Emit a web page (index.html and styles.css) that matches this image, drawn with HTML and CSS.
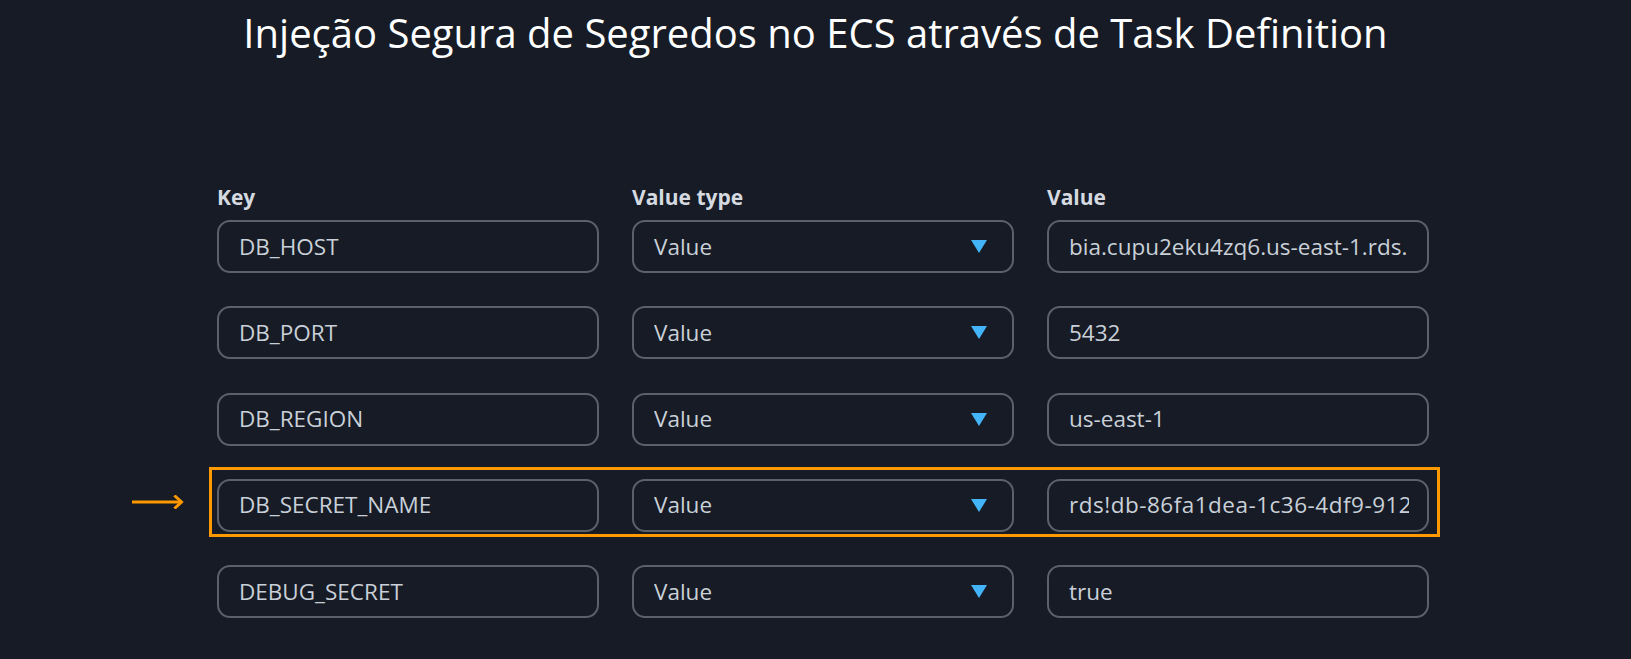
FILE: index.html
```html
<!DOCTYPE html>
<html lang="pt">
<head>
<meta charset="utf-8">
<title>Injeção Segura de Segredos no ECS através de Task Definition</title>
<link rel="stylesheet" href="styles.css">
</head>
<body>
<h1 class="title">Injeção Segura de Segredos no ECS através de Task Definition</h1>
<main class="form">
  <div class="grid labels">
    <div class="label">Key</div>
    <div class="label">Value type</div>
    <div class="label">Value</div>
  </div>
  <div class="rows">
    <div class="grid row">
      <div class="field"><span class="text">DB_HOST</span></div>
      <div class="field select"><span class="text">Value</span><span class="caret"></span></div>
      <div class="field"><span class="text">bia.cupu2eku4zq6.us-east-1.rds.</span></div>
    </div>
    <div class="grid row">
      <div class="field"><span class="text">DB_PORT</span></div>
      <div class="field select"><span class="text">Value</span><span class="caret"></span></div>
      <div class="field"><span class="text">5432</span></div>
    </div>
    <div class="grid row">
      <div class="field"><span class="text">DB_REGION</span></div>
      <div class="field select"><span class="text">Value</span><span class="caret"></span></div>
      <div class="field"><span class="text">us-east-1</span></div>
    </div>
    <div class="grid row highlighted">
      <svg class="arrow" width="52" height="14" viewBox="0 0 52 14" aria-hidden="true">
        <path d="M0 7 H49" stroke="#ff9900" stroke-width="3" fill="none"/>
        <path d="M43.5 1.5 L49.5 7 L43.5 12.5" stroke="#ff9900" stroke-width="3" fill="none" stroke-linecap="square"/>
      </svg>
      <span class="frame"></span>
      <div class="field"><span class="text">DB_SECRET_NAME</span></div>
      <div class="field select"><span class="text">Value</span><span class="caret"></span></div>
      <div class="field"><span class="text wide">rds!db-86fa1dea-1c36-4df9-912</span></div>
    </div>
    <div class="grid row">
      <div class="field"><span class="text">DEBUG_SECRET</span></div>
      <div class="field select"><span class="text">Value</span><span class="caret"></span></div>
      <div class="field"><span class="text">true</span></div>
    </div>
  </div>
</main>
</body>
</html>
```
FILE: styles.css
```css
html, body {
  margin: 0;
  padding: 0;
}
body {
  background: #161b25;
  font-family: "Open Sans", "Noto Sans", "DejaVu Sans", sans-serif;
  color: #c9d0d8;
  width: 1631px;
  height: 659px;
  overflow: hidden;
}
.title {
  margin: 0;
  padding-top: 6px;
  font-size: 40px;
  line-height: 54px;
  font-weight: 400;
  color: #ffffff;
  text-align: center;
}
.form {
  padding-top: 123px;
  padding-left: 217px;
}
.grid {
  display: grid;
  grid-template-columns: 382px 382px 382px;
  column-gap: 33px;
  width: max-content;
}
.labels {
  margin-bottom: 9px;
}
.label {
  font-size: 21px;
  line-height: 28px;
  font-weight: 700;
  color: #d5dae0;
}
.rows {
  display: flex;
  flex-direction: column;
  align-items: flex-start;
  gap: 33.33px;
}
.row {
  position: relative;
}
.field {
  box-sizing: border-box;
  height: 53px;
  border: 2px solid #5b616b;
  border-radius: 13px;
  padding: 0 18px 0 20px;
  display: flex;
  align-items: center;
  overflow: hidden;
}
.text {
  font-size: 22.5px;
  line-height: 30px;
  white-space: nowrap;
  overflow: hidden;
  flex: 1;
  min-width: 0;
  color: #c9d0d8;
}
.wide {
  letter-spacing: 0.5px;
}
.select {
  padding-right: 25px;
}
.caret {
  flex: none;
  width: 0;
  height: 0;
  border-left: 8px solid transparent;
  border-right: 8px solid transparent;
  border-top: 13px solid #44b4f8;
}
.frame {
  position: absolute;
  top: -12px;
  bottom: -5px;
  left: -8px;
  right: -11px;
  border: 3px solid #ff9900;
  pointer-events: none;
}
.arrow {
  position: absolute;
  left: -85px;
  top: 16px;
}
```
